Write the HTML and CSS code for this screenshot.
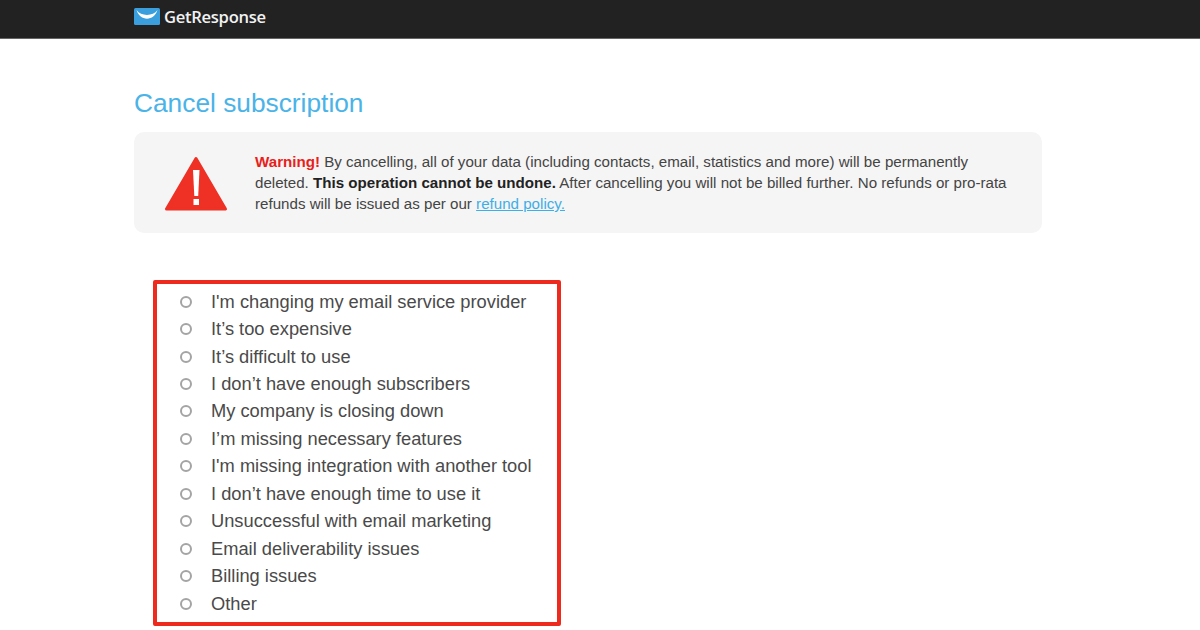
FILE: index.html
```html
<!DOCTYPE html>
<html lang="en">
<head>
    <meta charset="UTF-8">
    <title>Cancel subscription</title>
    <link rel="stylesheet" href="styles.css">
</head>
<body>
    <header class="topbar">
        <div class="logo">
            <svg class="logo-icon" width="26" height="17" viewBox="0 0 26 17">
                <rect width="26" height="17" rx="1.5" fill="#3a9fdc"/>
                <path d="M2.5 2 C7 8.5 19 8.5 23.5 2 C20 13.5 6 13.5 2.5 2 Z" fill="#fff"/>
            </svg>
            <span class="logo-text">GetResponse</span>
        </div>
    </header>
    <main class="container">
        <h1>Cancel subscription</h1>
        <div class="warning">
            <svg class="warning-icon" width="64" height="56" viewBox="0 0 64 56">
                <path d="M31 3.5 L60.5 54 H1.5 Z" fill="#ee3124" stroke="#ee3124" stroke-width="3" stroke-linejoin="round"/>
                <path d="M28 15 H34.5 L33.2 41 H29.3 Z" fill="#fff"/>
                <rect x="28.5" y="44" width="5.5" height="6" fill="#fff"/>
            </svg>
            <p><strong class="warn-label">Warning!</strong> By cancelling, all of your data (including contacts, email, statistics and more) will be permanently deleted. <strong>This operation cannot be undone.</strong> After cancelling you will not be billed further. No refunds or pro-rata refunds will be issued as per our <a href="#">refund policy.</a></p>
        </div>
        <ul class="reasons">
            <li><span class="radio"></span>I'm changing my email service provider</li>
            <li><span class="radio"></span>It’s too expensive</li>
            <li><span class="radio"></span>It’s difficult to use</li>
            <li><span class="radio"></span>I don’t have enough subscribers</li>
            <li><span class="radio"></span>My company is closing down</li>
            <li><span class="radio"></span>I’m missing necessary features</li>
            <li><span class="radio"></span>I'm missing integration with another tool</li>
            <li><span class="radio"></span>I don’t have enough time to use it</li>
            <li><span class="radio"></span>Unsuccessful with email marketing</li>
            <li><span class="radio"></span>Email deliverability issues</li>
            <li><span class="radio"></span>Billing issues</li>
            <li><span class="radio"></span>Other</li>
        </ul>
    </main>
</body>
</html>
```
FILE: styles.css
```css
body {
    margin: 0;
    height: 630px;
    overflow: hidden;
    background-color: #fff;
    font-family: "Liberation Sans", Arial, sans-serif;
    color: #444;
}
.topbar {
    height: 39px;
    background-color: #222;
    border-bottom: 1px solid #666;
    box-sizing: border-box;
    padding-left: 134px;
}
.logo {
    display: flex;
    align-items: center;
    gap: 4px;
    height: 33px;
}
.logo-icon { display: block; }
.logo-text {
    color: #f2f2f2;
    font-family: "Open Sans", sans-serif;
    font-size: 16.6px;
    font-weight: 600;
    letter-spacing: -0.3px;
}
.container {
    width: 908px;
    margin-left: 134px;
}
h1 {
    margin: 0;
    padding-top: 48px;
    font-size: 26.3px;
    line-height: 32px;
    font-weight: 400;
    font-family: "Liberation Sans", Arial, sans-serif;
    color: #4ab3e8;
}
.warning {
    display: flex;
    align-items: center;
    height: 101px;
    margin-top: 13px;
    padding: 0 0 0 31px;
    box-sizing: border-box;
    background-color: #f5f5f5;
    border-radius: 10px;
}
.warning-icon { flex: none; margin-right: 26px; }
.warning p {
    margin: 0;
    width: 760px;
    flex: none;
    font-size: 15.13px;
    line-height: 21px;
    color: #444;
}
.warning strong { color: #222; }
.warning .warn-label { color: #e8201a; }
.warning a { color: #3eaee6; }
.reasons {
    list-style: none;
    width: 408px;
    height: 346px;
    margin: 47px 0 0 19px;
    padding: 4px 0 0 0;
    box-sizing: border-box;
    border: 4px solid #ee2a1e;
    border-radius: 2px;
}
.reasons li {
    display: flex;
    align-items: center;
    height: 27.45px;
    font-size: 18.3px;
    color: #4a4a4a;
}
.radio {
    width: 8px;
    height: 8px;
    margin: 0 19px 0 23px;
    border: 2px solid #a4a4a4;
    border-radius: 50%;
    flex: none;
}
```
